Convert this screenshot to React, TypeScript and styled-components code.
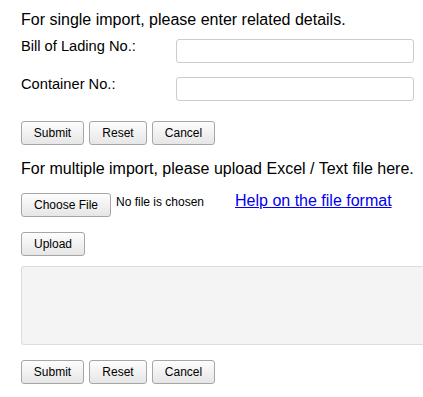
import React from "react";
import styled, { createGlobalStyle } from "styled-components";

const Global = createGlobalStyle`
  html, body {
    margin: 0;
    padding: 0;
    background: #ffffff;
    overflow: hidden;
  }
  body {
    font-family: "Liberation Sans", Arial, sans-serif;
    color: #000000;
  }
`;

const Page = styled.div`
  padding: 11px 0 0 21px;
  display: flex;
  flex-direction: column;
  align-items: flex-start;
`;

const Heading = styled.div<{ $mt?: number }>`
  font-size: 16px;
  line-height: 18px;
  margin-top: ${(p) => p.$mt ?? 0}px;
  white-space: nowrap;
`;

const Form = styled.div`
  display: grid;
  grid-template-columns: 155px 238px;
  row-gap: 14px;
  margin-top: 10px;
`;

const Label = styled.label`
  font-size: 11pt;
  line-height: 15px;
  white-space: nowrap;
`;

const TextInput = styled.input`
  box-sizing: border-box;
  width: 238px;
  height: 24px;
  border: 1px solid #cccccc;
  border-radius: 3px;
  background: #ffffff;
  padding: 0 6px;
  font-family: inherit;
  font-size: 13px;
  outline: none;
`;

const ButtonRow = styled.div<{ $mt: number }>`
  display: flex;
  gap: 5px;
  margin-top: ${(p) => p.$mt}px;
`;

const Button = styled.button<{ $w: number }>`
  box-sizing: border-box;
  width: ${(p) => p.$w}px;
  height: 24px;
  padding: 0;
  border: 1px solid #a6a6a6;
  border-radius: 3px;
  background: linear-gradient(#fdfdfd, #e6e6e6);
  font-family: "Liberation Sans", Arial, sans-serif;
  font-size: 12px;
  line-height: 14px;
  color: #000000;
  cursor: pointer;
`;

const FileRow = styled.div`
  display: flex;
  align-items: flex-start;
  margin-top: 15px;
`;

const NoFile = styled.span`
  font-size: 12px;
  line-height: 14px;
  margin: 2px 0 0 5px;
  white-space: nowrap;
`;

const HelpLink = styled.a`
  font-size: 16px;
  line-height: 16px;
  color: #0000ee;
  text-decoration: underline;
  margin-left: 31px;
  white-space: nowrap;
  cursor: pointer;
`;

const UploadArea = styled.div`
  box-sizing: border-box;
  align-self: stretch;
  height: 79px;
  margin-top: 10px;
  border: 1px solid #dddddd;
  border-right: none;
  border-radius: 3px 0 0 3px;
  background: #f4f4f4;
`;

const Actions = ({ mt }: { mt: number }) => (
  <ButtonRow $mt={mt}>
    <Button $w={63}>Submit</Button>
    <Button $w={58}>Reset</Button>
    <Button $w={63}>Cancel</Button>
  </ButtonRow>
);

export default function App() {
  return (
    <>
      <Global />
      <Page>
        <Heading>For single import, please enter related details.</Heading>
        <Form>
          <Label>Bill of Lading No.:</Label>
          <TextInput type="text" />
          <Label>Container No.:</Label>
          <TextInput type="text" />
        </Form>
        <Actions mt={20} />
        <Heading $mt={15}>For multiple import, please upload Excel / Text file here.</Heading>
        <FileRow>
          <Button $w={90}>Choose File</Button>
          <NoFile>No file is chosen</NoFile>
          <HelpLink>Help on the file format</HelpLink>
        </FileRow>
        <ButtonRow $mt={15}>
          <Button $w={64}>Upload</Button>
        </ButtonRow>
        <UploadArea />
        <Actions mt={15} />
      </Page>
    </>
  );
}
